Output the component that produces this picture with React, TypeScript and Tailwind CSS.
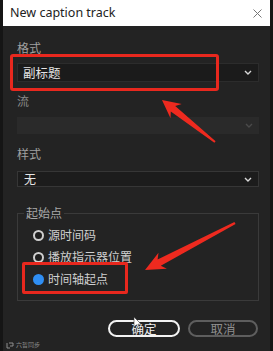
import React from "react";

const CJK = { fontFamily: '"Noto Sans CJK SC", "Noto Sans", sans-serif' };

function Chevron({ dim }: { dim?: boolean }) {
  return (
    <svg width="8" height="5" viewBox="0 0 8 5" className="shrink-0">
      <polyline
        points="1,1 4,4 7,1"
        fill="none"
        stroke={dim ? "#4a4a4a" : "#d8d8d8"}
        strokeWidth="1.4"
      />
    </svg>
  );
}

function Radio({ label, checked }: { label: string; checked?: boolean }) {
  return (
    <div className="flex h-[22px] items-center pl-[9px]">
      {checked ? (
        <span className="h-[11px] w-[11px] rounded-full bg-[#2f8ef3]" />
      ) : (
        <span className="h-[11px] w-[11px] rounded-full border-2 border-[#cfcfcf] bg-[#1e1e1e]" />
      )}
      <span className="ml-[4px] text-[12px] leading-[16px] text-[#cfcfcf]">{label}</span>
    </div>
  );
}

export default function App() {
  return (
    <div className="relative h-[351px] w-[273px] overflow-hidden bg-[#151515]" style={CJK}>
      <div className="ml-[3px] flex h-full w-[267px] flex-col bg-[#232323]">
        {/* Title bar */}
        <div className="flex h-[26px] shrink-0 items-center justify-between bg-white pl-[7px] pr-[8px]">
          <span
            className="text-[12.5px] text-[#222]"
            style={{ fontFamily: '"Noto Sans", "Open Sans", sans-serif' }}
          >
            New caption track
          </span>
          <svg width="9" height="9" viewBox="0 0 9 9">
            <path d="M0.5 0.5 L8.5 8.5 M8.5 0.5 L0.5 8.5" stroke="#777" strokeWidth="1" />
          </svg>
        </div>

        {/* Body */}
        <div className="flex flex-col pl-[14px] pr-[11px]">
          <div className="mt-[14px] h-[16px] text-[12px] leading-[16px] text-[#a0a0a0]">格式</div>
          <div className="mt-[7px] flex h-[19px] items-center justify-between border border-[#2c2c2c] bg-[#1b1b1b] pl-[5px] pr-[6px]">
            <span className="text-[12.5px] leading-[16px] text-[#e4e4e4]">副标题</span>
            <Chevron />
          </div>

          <div className="mt-[11px] h-[16px] text-[12px] leading-[16px] text-[#8a8a8a]">流</div>
          <div className="mt-[8px] flex h-[17px] items-center justify-end bg-[#2a2a2a] pr-[6px]">
            <Chevron dim />
          </div>

          <div className="mt-[12px] h-[16px] text-[12px] leading-[16px] text-[#a0a0a0]">样式</div>
          <div className="mt-[9px] flex h-[16px] items-center justify-between border border-[#363636] bg-[#1c1c1c] pl-[6px] pr-[6px]">
            <span className="text-[12px] leading-[14px] text-[#e4e4e4]">无</span>
            <Chevron />
          </div>

          <fieldset className="mt-[18px] border border-[#3a3a3a] pb-[10px] pl-[6px]">
            <legend className="px-[2px] text-[12px] leading-[16px] text-[#a8a8a8]">起始点</legend>
            <div className="mt-[3px] flex flex-col">
              <Radio label="源时间码" />
              <Radio label="播放指示器位置" />
              <Radio label="时间轴起点" checked />
            </div>
          </fieldset>

          <div className="mt-[19px] flex justify-end gap-[8px] pr-[1px]">
            <button className="flex h-[17px] w-[72px] items-center justify-center rounded-full border-2 border-[#f2f2f2] text-[12.5px] leading-[14px] text-[#f0f0f0]">
              确定
            </button>
            <button className="flex h-[17px] w-[70px] items-center justify-center rounded-full border-2 border-[#5e5e5e] text-[12.5px] leading-[14px] text-[#8e8e8e]">
              取消
            </button>
          </div>
        </div>

        {/* watermark */}
        <div className="mt-auto mb-[2px] ml-[3px] flex items-center gap-[2px] text-[#8c8c8c]">
          <svg width="8" height="7" viewBox="0 0 8 7">
            <path d="M1 1 V6 H4 M3 1 H7 V4 H4" fill="none" stroke="#999" strokeWidth="0.9" />
          </svg>
          <span className="text-[6px] leading-[8px]">六哲同步</span>
        </div>
      </div>

      {/* red annotation boxes */}
      <div className="absolute left-[10px] top-[54px] h-[37px] w-[209px] rounded-[3px] border-[3px] border-[#e8281e]" />
      <div className="absolute left-[22px] top-[262px] h-[32px] w-[106px] rounded-[2px] border-[3px] border-[#e8281e]" />

      {/* arrows + cursor */}
      <svg className="pointer-events-none absolute left-0 top-0" width="273" height="351" viewBox="0 0 273 351">
        <polygon
          fill="#ee2a1f"
          points="162,100 181.7,104.1 175.2,106.0 215.6,141.2 214.4,142.8 170.8,111.4 170.5,118.3"
        />
        <polygon
          fill="#ee2a1f"
          points="145,270 158.5,252.7 157.6,259.5 234.4,221.9 235.6,224.1 160.8,265.7 166.9,268.7"
        />
        <path d="M134 317 L134 327 L136.5 324.8 L138.3 328.5 L139.6 327.9 L137.9 324.3 L141 324 Z" fill="#fff" stroke="#333" strokeWidth="0.6" />
      </svg>
    </div>
  );
}
